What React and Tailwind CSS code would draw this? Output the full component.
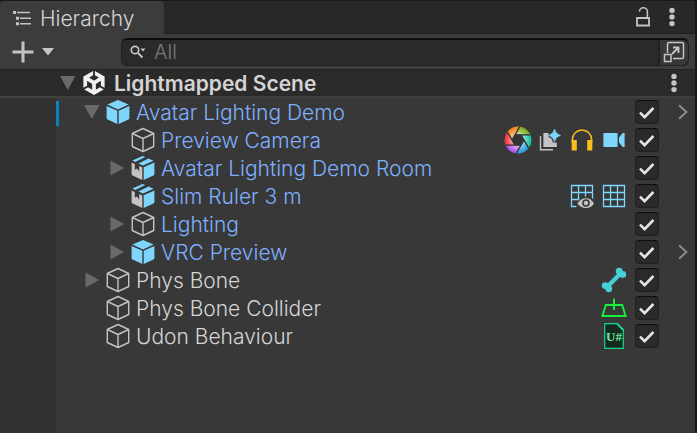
import React from "react";
import { SiUnity } from "react-icons/si";

function Fold({ open }) {
  return (
    <svg viewBox="0 0 16 16" className="h-4 w-4" fill="#6a6a6a" aria-hidden="true">
      {open ? <path d="M0 1H15.5L7.8 15Z" /> : <path d="M1.5 .5V15.5L15 8Z" />}
    </svg>
  );
}

function Cube({ solid }) {
  return (
    <svg viewBox="0 0 24 26" className="h-[26px] w-6 shrink-0" aria-hidden="true">
      {solid ? (
        <g fill="#7fd6fd">
          <path d="M12 1L22.6 5.6L12 10.4L1.4 5.6Z" />
          <path d="M.6 7L11.3 11.8V25L1.6 20.6Q.6 20.2 .6 19.2Z" />
          <path d="M23.4 7L12.7 11.8V25L22.4 20.6Q23.4 20.2 23.4 19.2Z" />
        </g>
      ) : (
        <g fill="none" stroke="#c4c4c4" strokeWidth="1.4" strokeLinejoin="round">
          <path d="M12 1.5L22.7 6.5V19.5L12 24.5L1.3 19.5V6.5Z" />
          <path d="M1.3 6.5L12 11.5L22.7 6.5M12 11.5V24.5" />
        </g>
      )}
    </svg>
  );
}

function ModelCube() {
  return (
    <svg viewBox="0 0 24 26" className="h-[26px] w-6 shrink-0" aria-hidden="true">
      <path d="M.6 7.6L3.8 9V14.8L6 13.4L8.2 16.4V11L11.3 12.4V25L1.6 20.6Q.6 20.2 .6 19.2Z" fill="#c4c4c4" />
      <g fill="#7fd6fd">
        <path d="M12.7 12.2L23.4 7.4V19.2Q23.4 20.2 22.4 20.6L12.7 25Z" />
        <path d="M1.4 5.6L11.6 1L14.2 2.1L4.2 7Z" />
        <path d="M7.4 8.4L17.4 3.4L22.6 5.8L12 10.6Z" />
      </g>
    </svg>
  );
}

const blades = [
  ["#f28a1e", "rotate(0 14 14)"],
  ["#84b02a", "rotate(60 14 14)"],
  ["#1fc4a6", "rotate(120 14 14)"],
  ["#2f9fe0", "rotate(180 14 14)"],
  ["#b657f0", "rotate(240 14 14)"],
  ["#ef3b45", "rotate(300 14 14)"],
];

function Aperture() {
  return (
    <svg viewBox="0 0 28 28" className="h-7 w-7" aria-hidden="true">
      <defs>
        <clipPath id="disc"><circle cx="14" cy="14" r="13.4" /></clipPath>
        <radialGradient id="sheen" gradientUnits="userSpaceOnUse" cx="14" cy="14" r="13.4">
          <stop offset="0.35" stopColor="#fff" stopOpacity="0.6" />
          <stop offset="0.9" stopColor="#fff" stopOpacity="0" />
        </radialGradient>
      </defs>
      <g clipPath="url(#disc)">
        {blades.map(([color, turn]) => (
          <path key={color} d="M8 14L-2 -3.3H18Z" fill={color} transform={turn} />
        ))}
        <circle cx="14" cy="14" r="13.4" fill="url(#sheen)" />
        {blades.map(([color, turn]) => (
          <path key={color} d="M8 14L18 -3.3" stroke="#303030" strokeWidth="1.3" transform={turn} />
        ))}
      </g>
      <path d="M11 8.8H17L20 14L17 19.2H11L8 14Z" fill="#353535" />
    </svg>
  );
}

function Probe() {
  return (
    <svg viewBox="0 0 22 22" className="h-[22px] w-[22px]" aria-hidden="true">
      <path d="M1.5 7V20.8H14" fill="none" stroke="#c4c4c4" strokeWidth="1.4" />
      <path d="M4.4 4H9.5V8L12.4 9.4L14 13.6H17.8V18H4.4Z" fill="#c4c4c4" />
      <path d="M15.5 0Q16.6 5.2 21.6 6.4Q16.6 7.6 15.5 12.6Q14.4 7.6 9.6 6.4Q14.4 5.2 15.5 0Z" fill="#7fd6fd" stroke="#7fd6fd" strokeWidth=".6" />
    </svg>
  );
}

function Headphones() {
  return (
    <svg viewBox="0 0 22 22" className="h-[22px] w-[22px]" aria-hidden="true">
      <path d="M1.4 14V10.5A9.6 9.6 0 0 1 20.6 10.5V14" fill="none" stroke="#fbc01d" strokeWidth="1.5" />
      <path d="M.7 11H5.8V21.6H.7ZM16.2 11H21.3V21.6H16.2Z" fill="#fbc01d" />
    </svg>
  );
}

function VideoCamera() {
  return (
    <svg viewBox="0 0 22 22" className="h-[22px] w-[22px]" aria-hidden="true">
      <rect x="0.4" y="4" width="14.2" height="14" rx="1" fill="#7fd6fd" />
      <path d="M16 8.4L19.8 4H21.6V18H19.8L16 13.6Z" fill="#7fd6fd" />
    </svg>
  );
}

function Grid({ eye }) {
  return (
    <svg viewBox="0 0 24 24" className="h-6 w-6" aria-hidden="true">
      <path d="M1.5 1.5H22.5V22.5H1.5ZM8.5 1.5V22.5M15.5 1.5V22.5M1.5 8.5H22.5M1.5 15.5H22.5" fill="none" stroke="#7fd6fd" strokeWidth="1.3" />
      {eye && (
        <>
          <path d="M6.4 19.5Q10 12.6 16 12.6T24 16.5V24H6.4Z" fill="#383838" />
          <path d="M7.4 19.4Q11 14.2 16 14.2T24 19.4Q21 24 16 24T7.4 19.4Z" fill="#c4c4c4" />
          <circle cx="16" cy="19" r="3.8" fill="#383838" />
          <circle cx="16" cy="19" r="2.2" fill="#c4c4c4" />
        </>
      )}
    </svg>
  );
}

function Bone() {
  return (
    <svg viewBox="0 0 26 26" className="h-[26px] w-[26px]" fill="#45d0d8" aria-hidden="true">
      <path d="M7 19L19 7" stroke="#45d0d8" strokeWidth="4.2" />
      <circle cx="4.2" cy="18.6" r="3.4" />
      <circle cx="7.8" cy="21.8" r="3.4" />
      <circle cx="18.2" cy="4.2" r="3.4" />
      <circle cx="21.8" cy="7.4" r="3.4" />
    </svg>
  );
}

function ContactPlane() {
  return (
    <svg viewBox="0 0 26 20" className="h-5 w-[26px]" aria-hidden="true">
      <path d="M4.8 7H21.2L24.6 18H1.4ZM13 .5V12" fill="none" stroke="#14f03c" strokeWidth="1.9" />
    </svg>
  );
}

function UdonScript() {
  return (
    <svg viewBox="0 0 20 26" className="h-[26px] w-5" aria-hidden="true">
      <path d="M.7 .7H13L19.3 7V25.3H.7Z" fill="#152a1e" stroke="#12d992" strokeWidth="1.2" />
      <path d="M13 .7L19.3 7" stroke="#12d992" strokeWidth="1.8" />
      <text x="10" y="18" textAnchor="middle" fill="#74e6a4" className="font-['Liberation_Serif',serif] text-[13px] font-bold">U#</text>
    </svg>
  );
}

const rows = [
  { name: "Avatar Lighting Demo", icon: "solid", depth: 0, open: true, fold: true, prefab: true, enter: true, changed: true },
  { name: "Preview Camera", icon: "outline", depth: 1, prefab: true, parts: "camera" },
  { name: "Avatar Lighting Demo Room", icon: "model", depth: 1, fold: true, prefab: true },
  { name: "Slim Ruler 3 m", icon: "model", depth: 1, prefab: true, parts: "grids" },
  { name: "Lighting", icon: "outline", depth: 1, fold: true, prefab: true },
  { name: "VRC Preview", icon: "solid", depth: 1, fold: true, prefab: true, enter: true },
  { name: "Phys Bone", icon: "outline", depth: 0, fold: true, parts: "bone" },
  { name: "Phys Bone Collider", icon: "outline", depth: 0, parts: "plane" },
  { name: "Udon Behaviour", icon: "outline", depth: 0, parts: "udon" },
];

function Slot({ children }) {
  return <span className="flex w-8 items-center justify-center">{children}</span>;
}

function Parts({ kind }) {
  if (kind === "camera")
    return (<><Slot><Aperture /></Slot><Slot><Probe /></Slot><Slot><Headphones /></Slot><Slot><VideoCamera /></Slot></>);
  if (kind === "grids") return (<><Slot><Grid eye /></Slot><Slot><Grid /></Slot></>);
  if (kind === "bone") return <Slot><Bone /></Slot>;
  if (kind === "plane") return <Slot><ContactPlane /></Slot>;
  if (kind === "udon") return <Slot><UdonScript /></Slot>;
  return null;
}

function Row({ row }) {
  return (
    <li className="flex h-7">
      <span className={row.changed ? "mt-[3px] w-[3px] bg-[#0f80be]" : "w-[3px]"} />
      <div className={row.depth ? "flex min-w-0 flex-1 items-center pl-[50px]" : "flex min-w-0 flex-1 items-center pl-[25px]"}>
        {row.fold ? (
          <button type="button" aria-label={"Toggle " + row.name} className="flex w-[22px] shrink-0"><Fold open={row.open} /></button>
        ) : (
          <span className="w-[22px] shrink-0" />
        )}
        {row.icon === "model" ? <ModelCube /> : <Cube solid={row.icon === "solid"} />}
        <span className={row.prefab ? "truncate pt-0.5 pl-[6px] text-[#7fb0ff]" : "truncate pt-0.5 pl-[6px] text-[#d4d4d4]"}>{row.name}</span>
      </div>
      <div className="flex shrink-0 items-center">
        <Parts kind={row.parts} />
        <label className="relative ml-[5px] flex">
          <input type="checkbox" defaultChecked aria-label={row.name + " active"} className="peer h-6 w-6 appearance-none rounded-[4px] border border-[#202020] border-t-[#0d0d0d] bg-[#2a2a2a]" />
          <svg viewBox="0 0 24 24" className="pointer-events-none absolute inset-0 hidden h-6 w-6 peer-checked:block" aria-hidden="true">
            <path d="M5 12.6L9.6 17.2L18.4 8" fill="none" stroke="#e6e6e6" strokeWidth="2.6" />
          </svg>
        </label>
        <span className="flex w-9 justify-end pr-[7px]">
          {row.enter && (
            <button type="button" aria-label={"Open " + row.name}>
              <svg viewBox="0 0 10 16" className="h-4 w-[10px]" aria-hidden="true"><path d="M1 1.2L8.4 8L1 14.8" fill="none" stroke="#8a8a8a" strokeWidth="2" /></svg>
            </button>
          )}
        </span>
      </div>
    </li>
  );
}

function Dots() {
  return (
    <svg viewBox="0 0 6 20" className="h-5 w-[6px]" fill="#c4c4c4" aria-hidden="true">
      <circle cx="3" cy="3.4" r="2.7" /><circle cx="3" cy="10" r="2.7" /><circle cx="3" cy="16.6" r="2.7" />
    </svg>
  );
}

export default function App() {
  return (
    <main className="flex min-h-screen flex-col border-r-2 border-[#191919] bg-[#383838] font-['Inter','Noto_Sans',sans-serif] text-[21px] leading-7 font-[350] text-[#d4d4d4]">
      <header className="flex h-[34px] items-stretch border-t border-[#191919] bg-[#282828]">
        <div className="flex w-[164px] items-center rounded-t-[4px] bg-[#3c3c3c] pl-3">
          <svg viewBox="0 0 20 16" className="h-4 w-5" stroke="#c4c4c4" strokeWidth="1.5" fill="none" aria-hidden="true">
            <path d="M5 2.5H18M8 8.2H19M8 13.8H19" />
            <path d="M1 2.5H4M4 8.2H7M4 13.8H7" strokeWidth="3" />
          </svg>
          <h1 className="pt-0.5 pl-2">Hierarchy</h1>
        </div>
        <div className="flex flex-1 items-center justify-end gap-[19px] border-b border-[#202020] pr-5">
          <button type="button" aria-label="Lock">
            <svg viewBox="0 0 14 20" className="h-5 w-[14px]" fill="none" stroke="#c4c4c4" aria-hidden="true">
              <path d="M1 11H13V18.5H1Z" strokeWidth="1.8" /><path d="M3.4 4.6A3.8 3.8 0 0 1 11.4 5V11" strokeWidth="1.6" />
            </svg>
          </button>
          <button type="button" aria-label="Window menu"><Dots /></button>
        </div>
      </header>
      <div className="flex h-9 items-center border-b border-[#232323] bg-[#3c3c3c] pr-[6px] pl-3">
        <button type="button" aria-label="Add" className="flex items-center gap-2">
          <svg viewBox="0 0 22 22" className="h-[22px] w-[22px]" aria-hidden="true"><path d="M11 .5V21.5M.5 11H21.5" stroke="#c4c4c4" strokeWidth="3" /></svg>
          <svg viewBox="0 0 12 8" className="h-2 w-3" fill="#c4c4c4" aria-hidden="true"><path d="M0 0H12L6 7.5Z" /></svg>
        </button>
        <label className="ml-[67px] flex h-7 min-w-0 flex-1 items-center rounded-[6px] border border-[#202020] border-t-2 border-t-[#0d0d0d] bg-[#2a2a2a] pl-2">
          <svg viewBox="0 0 16 14" className="h-[14px] w-4 shrink-0" fill="none" stroke="#c4c4c4" aria-hidden="true">
            <circle cx="5" cy="5" r="3.7" strokeWidth="1.7" /><path d="M7.6 7.6L12.5 12.5" strokeWidth="2" /><path d="M10.5 3.5H15.5L13 6.5Z" fill="#c4c4c4" stroke="none" />
          </svg>
          <input type="text" placeholder="All" aria-label="Search" className="ml-2 min-w-0 flex-1 bg-transparent text-[20px] outline-none placeholder:text-[#7c7c7c]" />
          <button type="button" aria-label="Open search window" className="flex h-full items-center rounded-r-[6px] border-l-2 border-[#222222] bg-[#383838] px-[3px]">
            <svg viewBox="0 0 22 22" className="h-[22px] w-[22px]" fill="none" stroke="#c4c4c4" strokeWidth="1.5" aria-hidden="true">
              <path d="M4.5 12V3Q4.5 1.5 6 1.5H19Q20.5 1.5 20.5 3V16Q20.5 17.5 19 17.5H10" /><path d="M1.5 13.5H8V20.5H1.5Z" /><path d="M9 13L15.5 6.5M10 6.5H15.5V12" strokeWidth="1.8" />
            </svg>
          </button>
        </label>
      </div>
      <div className="flex h-7 items-center border-b-2 border-[#404040] bg-[#2a2a2a] pr-[18px] pl-[60px]">
        <button type="button" aria-label="Toggle scene" className="flex"><Fold open /></button>
        <span className="flex pl-[6px]"><SiUnity className="h-6 w-6 text-[#f0f0f0]" aria-hidden="true" /></span>
        <h2 className="flex-1 truncate pt-0.5 pl-2 font-semibold">Lightmapped Scene</h2>
        <button type="button" aria-label="Scene menu"><Dots /></button>
      </div>
      <div className="flex flex-1">
        <div className="w-14 shrink-0 bg-[#323232]" />
        <ul className="min-w-0 flex-1">
          {rows.map((row) => <Row key={row.name} row={row} />)}
        </ul>
      </div>
    </main>
  );
}
